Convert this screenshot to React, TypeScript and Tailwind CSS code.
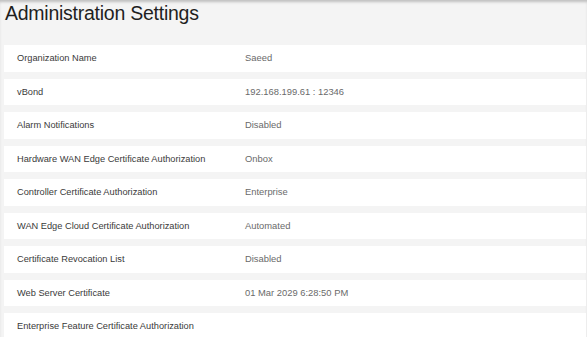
import React from "react";

const rows: [string, string][] = [
  ["Organization Name", "Saeed"],
  ["vBond", "192.168.199.61 : 12346"],
  ["Alarm Notifications", "Disabled"],
  ["Hardware WAN Edge Certificate Authorization", "Onbox"],
  ["Controller Certificate Authorization", "Enterprise"],
  ["WAN Edge Cloud Certificate Authorization", "Automated"],
  ["Certificate Revocation List", "Disabled"],
  ["Web Server Certificate", "01 Mar 2029 6:28:50 PM"],
  ["Enterprise Feature Certificate Authorization", ""],
];

export default function App() {
  return (
    <div
      className="w-[587px] h-[337px] overflow-hidden bg-[#f4f4f4] shadow-[inset_0_3px_3px_-1px_rgba(0,0,0,0.22)]"
      style={{ fontFamily: '"Liberation Sans", Arial, sans-serif' }}
    >
      <div className="h-[45px] pl-[5px] pt-[1px]">
        <h1 className="text-[19.5px] leading-[24px] text-[#1f1f1f] tracking-[-0.25px]">
          Administration Settings
        </h1>
      </div>
      <div className="flex flex-col gap-[7px] pl-[4px] pr-[1px]">
        {rows.map(([label, value]) => (
          <div
            key={label}
            className="h-[26.5px] bg-white flex items-center pl-[13px] shrink-0"
          >
            <div className="flex items-baseline leading-[12px]">
              <div className="w-[228px] text-[9.25px] text-[#3a3a3a]">{label}</div>
              <div className="text-[9.4px] text-[#6a6a6a]">{value}</div>
            </div>
          </div>
        ))}
      </div>
    </div>
  );
}
